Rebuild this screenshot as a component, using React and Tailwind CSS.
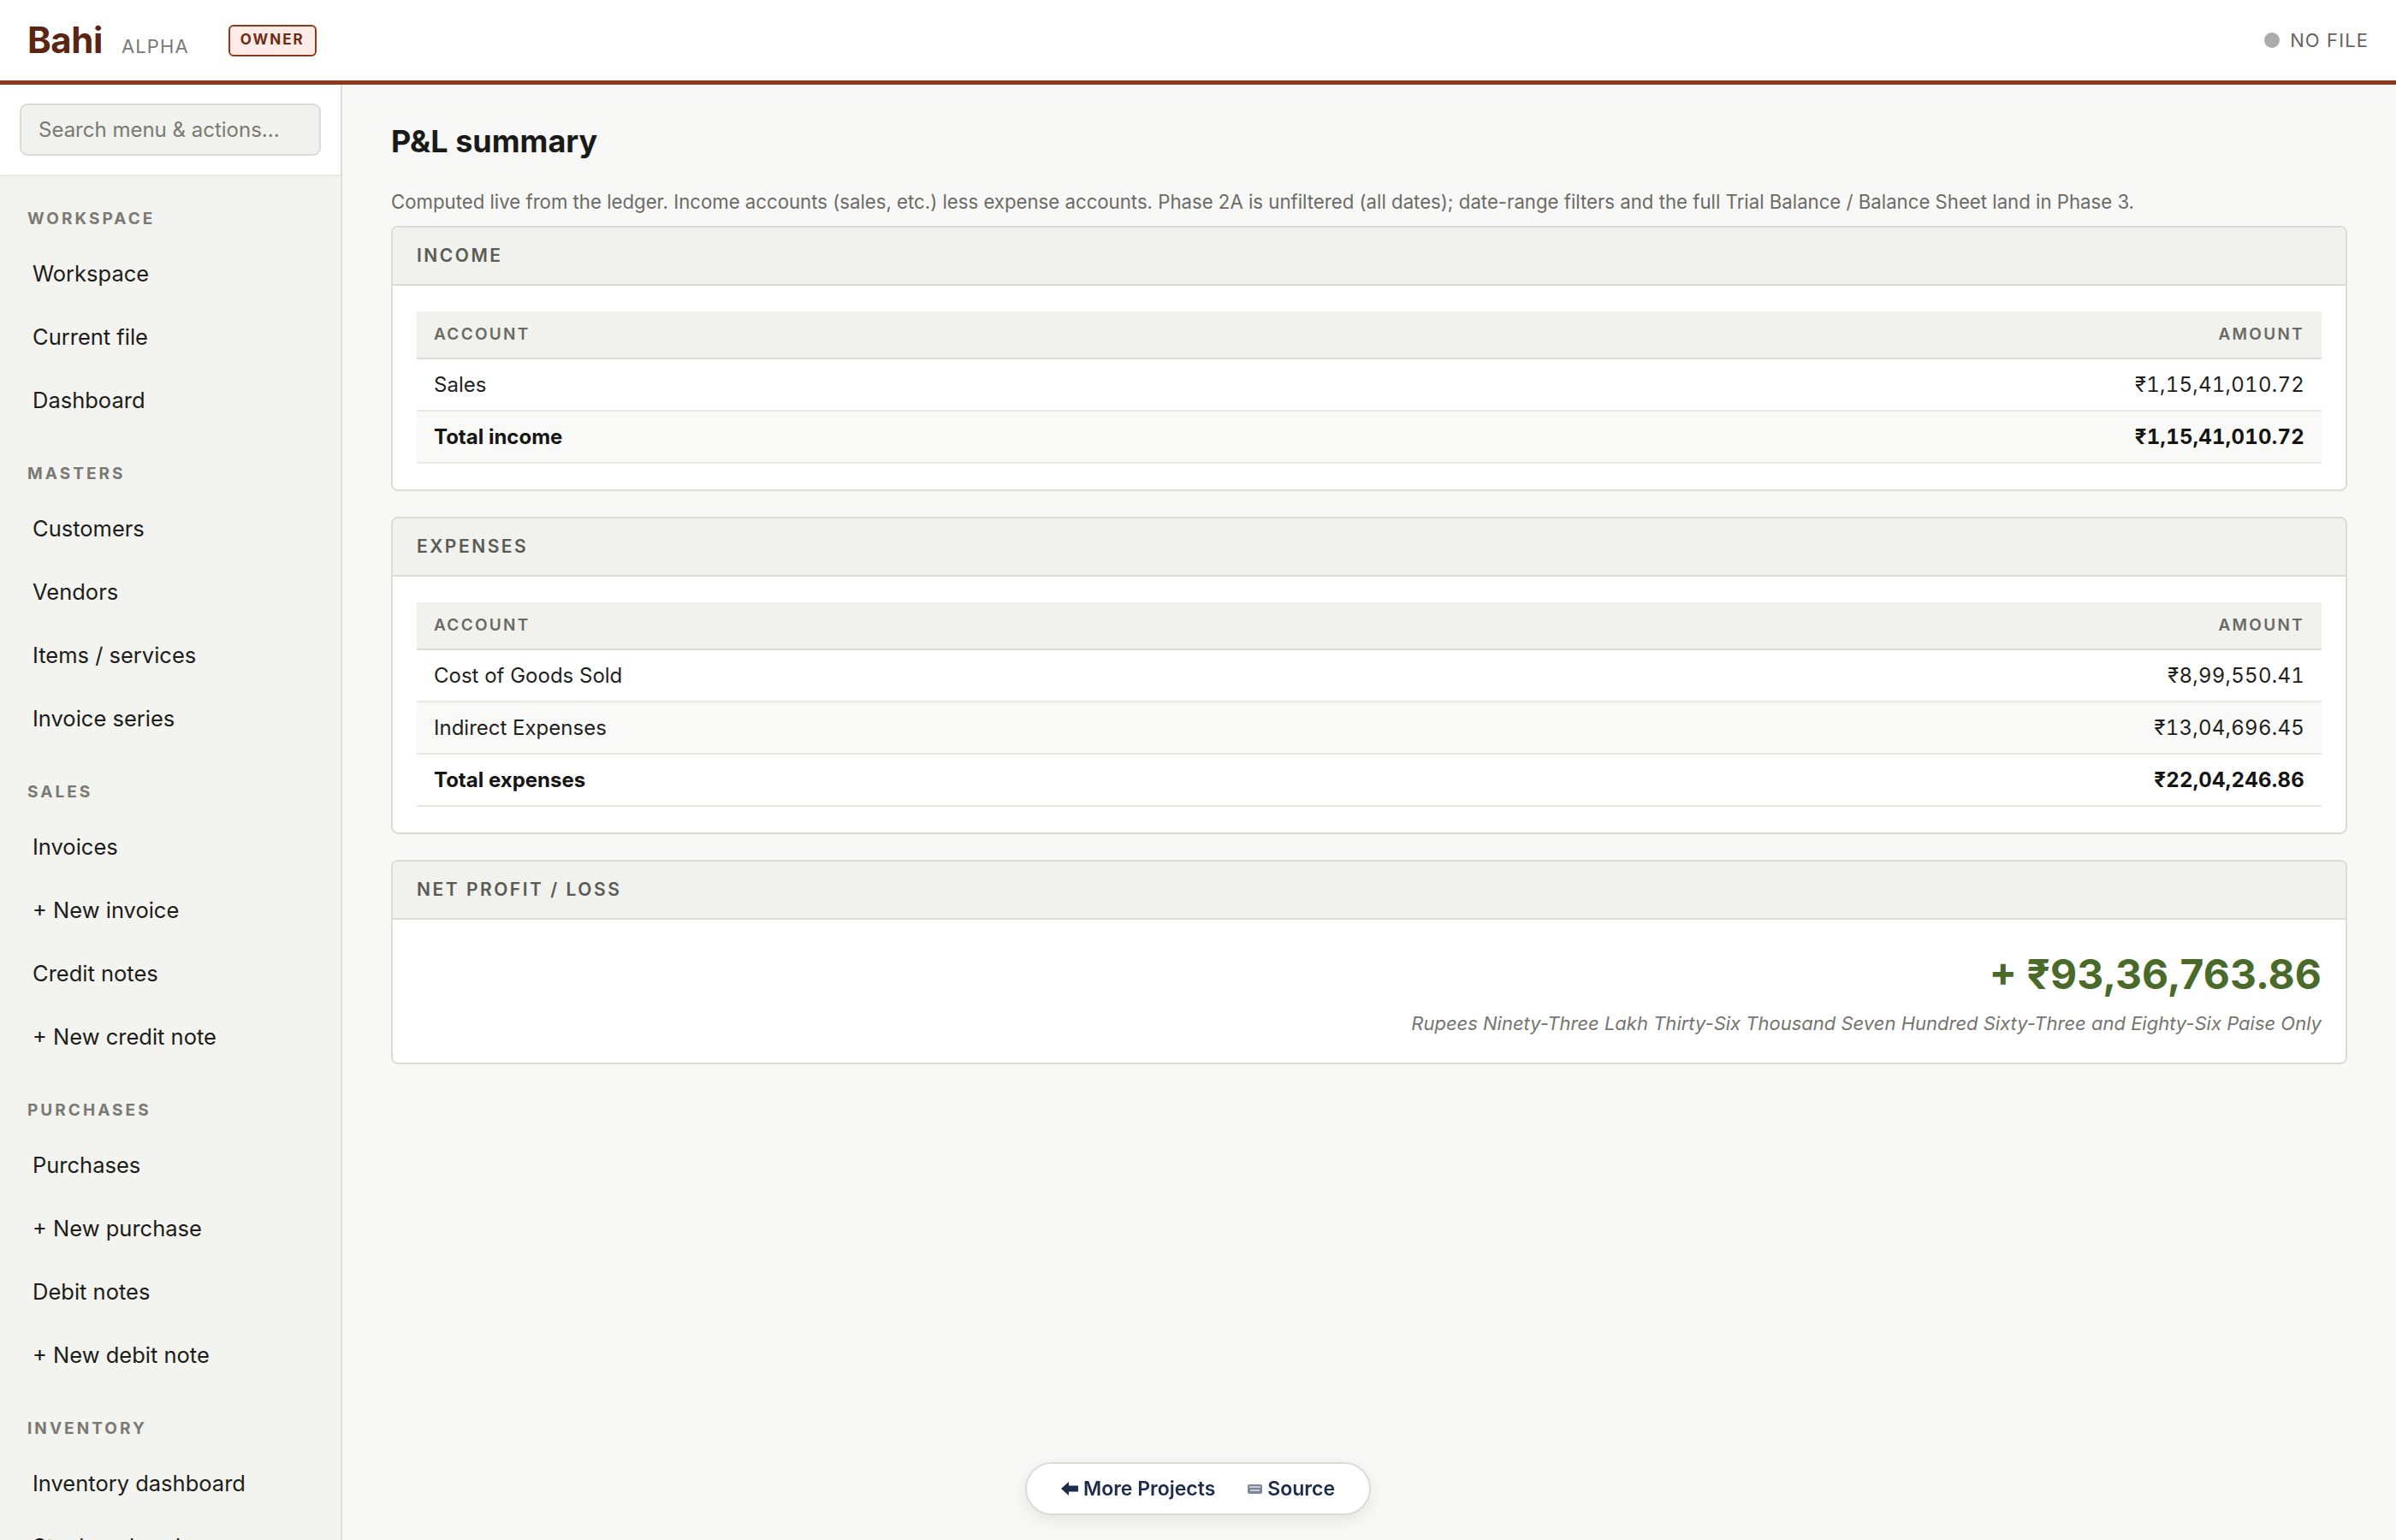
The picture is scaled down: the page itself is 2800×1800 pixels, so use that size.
const NAV = [
  { label: "Workspace", items: ["Workspace", "Current file", "Dashboard"] },
  { label: "Masters", items: ["Customers", "Vendors", "Items / services", "Invoice series"] },
  { label: "Sales", items: ["Invoices", "+ New invoice", "Credit notes", "+ New credit note"] },
  { label: "Purchases", items: ["Purchases", "+ New purchase", "Debit notes", "+ New debit note"] },
  { label: "Inventory", items: ["Inventory dashboard", "Stock on hand", "Stock ledger"] },
];

const INCOME = [
  { name: "Sales", amount: "₹1,15,41,010.72" },
  { name: "Total income", amount: "₹1,15,41,010.72", total: true },
];

const EXPENSES = [
  { name: "Cost of Goods Sold", amount: "₹8,99,550.41" },
  { name: "Indirect Expenses", amount: "₹13,04,696.45" },
  { name: "Total expenses", amount: "₹22,04,246.86", total: true },
];

function Header() {
  return (
    <header className="flex h-[99px] shrink-0 items-center justify-between border-b-[5px] border-[#8b3a1e] bg-white px-[32px]">
      <div className="flex items-center">
        <div className="flex items-baseline gap-[22px]">
          <span className="text-[42px] font-bold leading-none tracking-[-0.01em] text-[#5c2511]">Bahi</span>
          <span className="text-[22px] leading-none tracking-[0.05em] text-[#7a7a74]">ALPHA</span>
        </div>
        <span className="ml-[46px] flex h-[37px] items-center rounded-[6px] border-2 border-[#8b3a1e] bg-[#fcebe6] px-[12px] text-[17px] font-bold tracking-[0.12em] text-[#6e2a14]">
          OWNER
        </span>
      </div>
      <div className="flex items-center gap-[12px]">
        <span className="h-[18px] w-[18px] rounded-full bg-[#ababab]" />
        <span className="text-[22px] tracking-[0.05em] text-[#66665f]">NO FILE</span>
      </div>
    </header>
  );
}

function Sidebar() {
  return (
    <aside className="flex w-[400px] shrink-0 flex-col border-r-2 border-[#e0e0da] bg-[#f3f3ef]">
      <div className="bg-white px-[23px] py-[22px] shadow-[0_2px_3px_rgba(0,0,0,0.06)]">
        <input
          className="h-[61px] w-full rounded-[9px] border-2 border-[#dcdcd6] bg-[#f1f1ed] px-[20px] text-[24px] text-[#333] outline-none placeholder:text-[#7a7a74]"
          placeholder="Search menu & actions..."
        />
      </div>
      <nav className="flex flex-1 flex-col gap-[22px] overflow-hidden px-[32px] pt-[25px]">
        {NAV.map((section) => (
          <div key={section.label}>
            <p className="flex h-[54px] items-center text-[19px] font-bold uppercase tracking-[0.16em] text-[#7a7a73]">
              {section.label}
            </p>
            {section.items.map((item) => (
              <a key={item} className="flex h-[74px] items-center pl-[6px] text-[25.5px] text-[#1c1c1a]">
                {item}
              </a>
            ))}
          </div>
        ))}
      </nav>
    </aside>
  );
}

function Card({ title, children }) {
  return (
    <section className="overflow-hidden rounded-[8px] border-2 border-[#dcdcd6] bg-white">
      <div className="flex h-[68px] items-center border-b-2 border-[#dcdcd6] bg-[#f1f1ed] px-[28px] text-[21px] font-semibold tracking-[0.12em] text-[#5b5b55]">
        {title}
      </div>
      {children}
    </section>
  );
}

function AccountTable({ rows }) {
  return (
    <div className="px-[28px] py-[30px]">
      <table className="w-full border-collapse">
        <thead>
          <tr className="h-[55px] border-b-2 border-[#dcdcd6] bg-[#f1f1ed] text-[19px] font-semibold tracking-[0.12em] text-[#6a6a64]">
            <th className="px-[20px] text-left font-semibold">ACCOUNT</th>
            <th className="px-[20px] text-right font-semibold">AMOUNT</th>
          </tr>
        </thead>
        <tbody>
          {rows.map((row) => (
            <tr
              key={row.name}
              className={`h-[61px] border-b-2 border-[#e8e8e3] text-[24px] even:bg-[#f9f9f7] ${
                row.total ? "font-bold text-[#151513]" : "text-[#1f1f1d]"
              }`}
            >
              <td className="px-[20px]">{row.name}</td>
              <td className="px-[20px] text-right tabular-nums tracking-[0.01em]">{row.amount}</td>
            </tr>
          ))}
        </tbody>
      </table>
    </div>
  );
}

function FooterPill() {
  return (
    <div className="fixed bottom-[29px] left-1/2 flex h-[62px] w-[404px] -translate-x-1/2 items-center justify-between rounded-full border-2 border-[#dcdcd4] bg-white px-[40px] text-[23px] font-semibold text-[#1d2b4d] shadow-[0_6px_18px_rgba(0,0,0,0.08)]">
      <a className="flex items-center gap-[6px]">
        <svg width="20" height="16" viewBox="0 0 20 16" fill="#1d2b4d">
          <path d="M0 8 L9 0 V4.5 H20 V11.5 H9 V16 Z" />
        </svg>
        More Projects
      </a>
      <a className="flex items-center gap-[6px]">
        <svg width="17" height="11" viewBox="0 0 17 11">
          <rect x="0" y="0" width="17" height="11" rx="2" fill="#7d8596" />
          <rect x="2" y="2" width="13" height="2" fill="#c9ced8" />
          <rect x="3" y="6" width="11" height="2" fill="#c9ced8" />
        </svg>
        Source
      </a>
    </div>
  );
}

export default function App() {
  return (
    <div className="flex h-screen flex-col overflow-hidden font-['Inter',sans-serif]">
      <Header />
      <div className="flex min-h-0 flex-1">
        <Sidebar />
        <main className="flex-1 overflow-hidden bg-[#f8f8f6] px-[57px] pt-[44px]">
          <h1 className="text-[36px] font-bold leading-[44px] text-[#1a1a18]">P&amp;L summary</h1>
          <p className="mt-[32px] text-[22.2px] leading-[34px] text-[#6b6b66]">
            Computed live from the ledger. Income accounts (sales, etc.) less expense accounts. Phase 2A is unfiltered
            (all dates); date-range filters and the full Trial Balance / Balance Sheet land in Phase 3.
          </p>
          <div className="mt-[11px] flex flex-col gap-[30px]">
            <Card title="INCOME">
              <AccountTable rows={INCOME} />
            </Card>
            <Card title="EXPENSES">
              <AccountTable rows={EXPENSES} />
            </Card>
            <Card title="NET PROFIT / LOSS">
              <div className="px-[28px] py-[30px] text-right">
                <p className="text-[48px] font-bold leading-[68px] text-[#4a6a2a]">+ ₹93,36,763.86</p>
                <p className="mt-[7px] text-[22px] italic leading-[32px] text-[#75756f]">
                  Rupees Ninety-Three Lakh Thirty-Six Thousand Seven Hundred Sixty-Three and Eighty-Six Paise Only
                </p>
              </div>
            </Card>
          </div>
        </main>
      </div>
      <FooterPill />
    </div>
  );
}
